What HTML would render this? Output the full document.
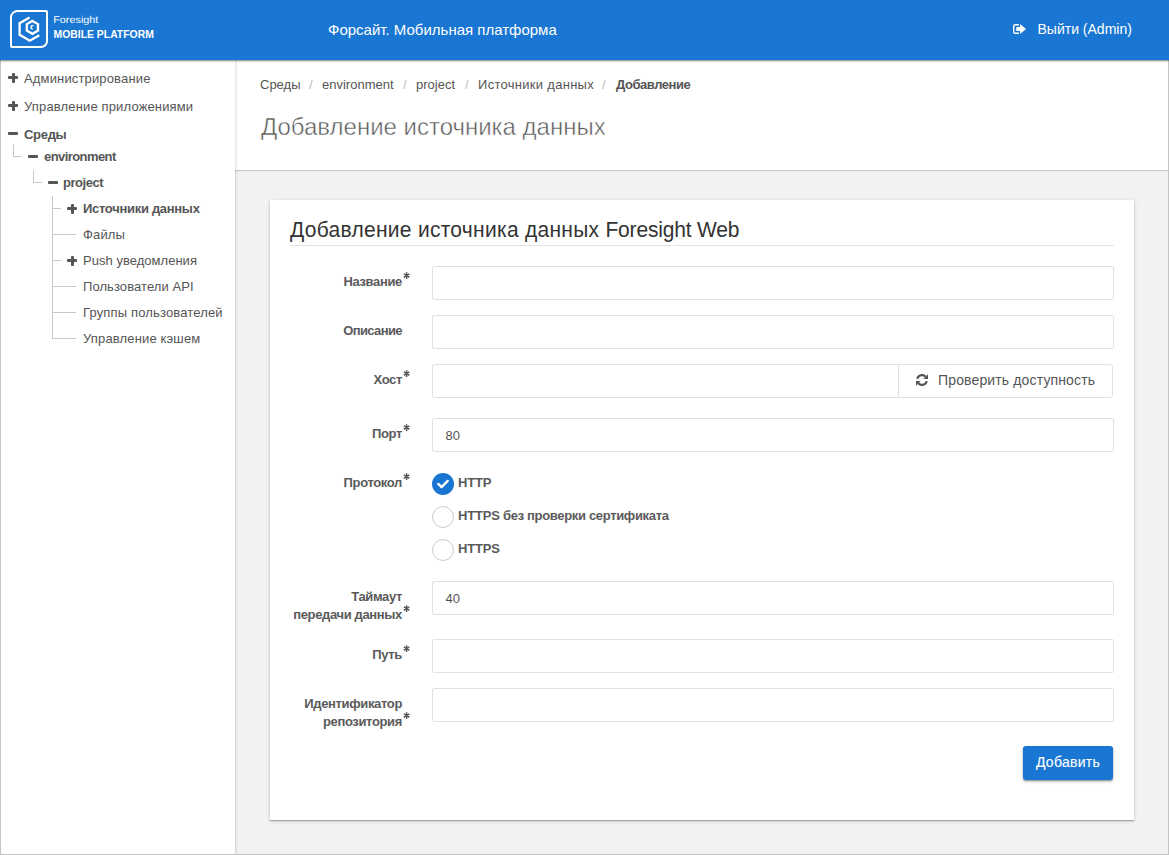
<!DOCTYPE html>
<html lang="ru">
<head>
<meta charset="utf-8">
<title>Добавление источника данных</title>
<style>
*{box-sizing:border-box;}
html,body{margin:0;padding:0;}
body{width:1169px;height:855px;position:relative;overflow:hidden;background:#f2f2f2;font-family:"Liberation Sans",sans-serif;font-size:13px;color:#555;}
.abs{position:absolute;}
#frame{position:absolute;left:0;top:60px;width:1169px;height:795px;border-right:1px solid #c4c4c4;border-bottom:1px solid #c4c4c4;border-left:1px solid #c4c4c4;z-index:10;pointer-events:none;}
#topbar{position:absolute;left:0;top:0;width:1169px;height:60px;background:#1976d2;z-index:20;box-shadow:0 1px 1px rgba(0,0,0,.3),0 1px 3px rgba(0,0,0,.18);}
#topbar .t1{position:absolute;left:328px;top:21px;font-size:15px;line-height:17px;color:#fff;white-space:nowrap;}
#topbar .t2{position:absolute;left:1037.5px;top:21px;font-size:14px;line-height:17px;color:#fff;white-space:nowrap;}
#logo{position:absolute;left:0;top:0;}
#side{position:absolute;left:0;top:60px;width:235px;height:795px;background:#fff;box-shadow:0 0 3px rgba(0,0,0,.27);z-index:5;}
.ti{position:absolute;white-space:nowrap;font-size:13px;line-height:16px;color:#555;letter-spacing:.15px;}
.ti.b{font-weight:bold;letter-spacing:-.3px;color:#555;}
.ln{position:absolute;background:#c8c8c8;}
.pl{position:absolute;width:10px;height:10px;}
.pl:before{content:"";position:absolute;left:0;top:2.7px;width:10.3px;height:3px;background:#555;border-radius:1px;}
.pl.p:after{content:"";position:absolute;left:3.6px;top:0;width:3px;height:10px;background:#555;border-radius:1px;}
#head{position:absolute;left:235px;top:60px;width:934px;height:111px;background:#fff;border-bottom:1px solid #cbcbcb;box-shadow:0 1px 1px rgba(0,0,0,.04);z-index:4;}
.bc{position:absolute;top:17px;font-size:13px;line-height:16px;white-space:nowrap;color:#555;}
.bc.s{color:#bbb;}
#h1{position:absolute;left:26px;top:53px;font-size:24px;line-height:28px;color:#555;white-space:nowrap;letter-spacing:-.01px;-webkit-text-stroke:.5px #fff;}
#card{position:absolute;left:270px;top:200px;width:864px;height:620px;background:#fff;box-shadow:0 1px 1px rgba(0,0,0,.25),0 1px 4px rgba(0,0,0,.15);}
#ct{position:absolute;left:20px;top:17px;font-size:21px;line-height:26px;color:#333;white-space:nowrap;letter-spacing:.13px;transform-origin:0 20px;transform:scaleY(1.05);}
#hr{position:absolute;left:20px;top:45px;width:824px;height:1px;background:#e3e3e3;}
.inp{position:absolute;left:162px;width:682px;height:34px;border:1px solid #dfe2e5;background:#fff;border-radius:2px;font-size:13px;line-height:33px;padding-left:12.5px;color:#555;}
.lb{position:absolute;right:732px;text-align:right;font-weight:bold;font-size:13px;line-height:18px;color:#5a5a5a;white-space:nowrap;letter-spacing:-.35px;}
.lb svg{position:absolute;right:-8.1px;bottom:11.9px;width:7.2px;height:7.2px;overflow:visible;}
.rd{position:absolute;left:162px;width:22px;height:22px;border-radius:50%;border:1px solid #d0cdc7;background:#fff;}
.rd.on{border:0;background:#1976d2;}
.rl{position:absolute;left:188px;font-weight:bold;font-size:13px;line-height:16px;color:#5a5a5a;white-space:nowrap;letter-spacing:-.2px;}
#chk{position:absolute;left:628px;top:164px;width:215px;height:34px;border:1px solid #dfe2e5;border-radius:0 3px 3px 0;background:#fff;font-size:14px;line-height:30px;color:#555;}
#btn{position:absolute;left:753px;top:546px;width:90px;height:34px;background:#1976d2;border-radius:3px;color:#fff;font-size:14px;line-height:33px;text-align:center;letter-spacing:.28px;-webkit-text-stroke:.12px #fff;box-shadow:0 1px 2px rgba(0,0,0,.35),0 2px 3px rgba(0,0,0,.15);}
</style>
</head>
<body>
<div id="topbar">
<svg id="logo" width="200" height="60" viewBox="0 0 200 60">
<path d="M17.5 11 H46 a1 1 0 0 1 1 1 V41 a6 6 0 0 1 -6 6 H12 a1 1 0 0 1 -1 -1 V17.5 a6.5 6.5 0 0 1 6.5 -6.5 Z" fill="none" stroke="#fff" stroke-width="2"/>
<path d="M29.6 17.6 L19.6 23.3 V34.8 L29.8 40.7 L39.3 35.2" fill="none" stroke="#fff" stroke-width="2.35" stroke-linejoin="miter"/>
<path d="M32.4 20.9 L38 24.1 V30.6 L32.4 33.8 L26.8 30.6 V24.1 Z" fill="none" stroke="#fff" stroke-width="2.35"/>
<path d="M33.6 25.9 A1.7 1.7 0 1 0 32.7 29" fill="none" stroke="#fff" stroke-width="1.4"/>
<text text-rendering="geometricPrecision" x="53.2" y="23.2" font-family="Liberation Sans" font-size="10" fill="#fff" textLength="45.2" lengthAdjust="spacingAndGlyphs">Foresight</text>
<text x="53.6" y="37.7" font-family="Liberation Sans" font-size="10.4" font-weight="bold" fill="#fff" textLength="100.2" lengthAdjust="spacingAndGlyphs">MOBILE PLATFORM</text>
</svg>
<div class="t1">Форсайт. Мобильная платформа</div>
<svg class="abs" style="left:1012px;top:23px" width="15" height="12" viewBox="0 0 15 12"><path d="M6.9 1.7 H3.2 a1.5 1.5 0 0 0 -1.5 1.5 V8.8 a1.5 1.5 0 0 0 1.5 1.5 H6.9" fill="none" stroke="#fff" stroke-width="1.4"/><path d="M4.3 3.9 H8.1 V1.1 L14 6 L8.1 10.9 V8.1 H4.3 Z" fill="#fff"/></svg>
<div class="t2">Выйти (Admin)</div>
</div>

<div id="side">
<div class="pl p" style="left:8px;top:13px"></div><div class="ti" style="left:24px;top:11px">Администрирование</div>
<div class="pl p" style="left:8px;top:41px"></div><div class="ti" style="left:24px;top:39px">Управление приложениями</div>
<div class="pl" style="left:8px;top:69px"></div><div class="ti b" style="left:24px;top:67px">Среды</div>
<div class="ln" style="left:13px;top:84px;width:1px;height:12px"></div><div class="ln" style="left:13px;top:96px;width:9px;height:1px"></div>
<div class="pl" style="left:28px;top:92px"></div><div class="ti b" style="left:44px;top:89px;letter-spacing:-.57px">environment</div>
<div class="ln" style="left:33px;top:110px;width:1px;height:12px"></div><div class="ln" style="left:33px;top:122px;width:9px;height:1px"></div>
<div class="pl" style="left:47.5px;top:118px"></div><div class="ti b" style="left:63px;top:115px;letter-spacing:-.45px">project</div>
<div class="ln" style="left:52px;top:136px;width:1px;height:143px"></div>
<div class="ln" style="left:52px;top:148px;width:9px;height:1px"></div><div class="pl p" style="left:67px;top:144px"></div><div class="ti b" style="left:83px;top:141px">Источники данных</div>
<div class="ln" style="left:52px;top:174px;width:24px;height:1px"></div><div class="ti" style="left:83px;top:167px">Файлы</div>
<div class="ln" style="left:52px;top:200px;width:9px;height:1px"></div><div class="pl p" style="left:67px;top:196px"></div><div class="ti" style="left:83px;top:193px;letter-spacing:.03px">Push уведомления</div>
<div class="ln" style="left:52px;top:226px;width:24px;height:1px"></div><div class="ti" style="left:83px;top:219px;letter-spacing:.08px">Пользователи API</div>
<div class="ln" style="left:52px;top:252px;width:24px;height:1px"></div><div class="ti" style="left:83px;top:245px">Группы пользователей</div>
<div class="ln" style="left:52px;top:278px;width:24px;height:1px"></div><div class="ti" style="left:83px;top:271px">Управление кэшем</div>
</div>

<div id="head">
<span class="bc" style="left:25px">Среды</span><span class="bc s" style="left:74px">/</span>
<span class="bc" style="left:87px">environment</span><span class="bc s" style="left:168px">/</span>
<span class="bc" style="left:181px">project</span><span class="bc s" style="left:230px">/</span>
<span class="bc" style="left:243px;letter-spacing:.29px">Источники данных</span><span class="bc s" style="left:367px">/</span>
<span class="bc" style="left:381px;font-weight:bold;letter-spacing:-.45px">Добавление</span>
<div id="h1">Добавление источника данных</div>
</div>

<div id="card">
<div id="ct"><span style="letter-spacing:.28px">Добавление источника данных </span><span style="letter-spacing:-.19px">Foresight Web</span></div>
<div id="hr"></div>

<div class="lb" style="top:73px">Название<svg viewBox="0 0 7.2 7.2"><path d="M3.6 .3V6.9M.85 1.95L6.35 5.25M.85 5.25L6.35 1.95" stroke="#595959" stroke-width="1.5" fill="none"/></svg></div><div class="inp" style="top:66px"></div>
<div class="lb" style="top:122px;letter-spacing:-.6px">Описание</div><div class="inp" style="top:115px"></div>
<div class="lb" style="top:171px">Хост<svg viewBox="0 0 7.2 7.2"><path d="M3.6 .3V6.9M.85 1.95L6.35 5.25M.85 5.25L6.35 1.95" stroke="#595959" stroke-width="1.5" fill="none"/></svg></div><div class="inp" style="top:164px;width:467px;border-radius:2px 0 0 2px"></div>
<div id="chk"><svg class="abs" style="left:17px;top:9px" width="12" height="12" viewBox="0 0 12 12"><path d="M1.25 4.75 A4.9 4.9 0 0 1 9.6 2.7" fill="none" stroke="#555" stroke-width="2.3"/><path d="M12 .3 V4.9 H7.3 Z" fill="#555"/><path d="M10.75 7.25 A4.9 4.9 0 0 1 2.4 9.3" fill="none" stroke="#555" stroke-width="2.3"/><path d="M0 11.7 V7.1 H4.7 Z" fill="#555"/></svg><span class="abs" style="left:39px;top:0;white-space:nowrap;letter-spacing:.14px">Проверить доступность</span></div>
<div class="lb" style="top:225px">Порт<svg viewBox="0 0 7.2 7.2"><path d="M3.6 .3V6.9M.85 1.95L6.35 5.25M.85 5.25L6.35 1.95" stroke="#595959" stroke-width="1.5" fill="none"/></svg></div><div class="inp" style="top:218px">80</div>
<div class="lb" style="top:274px">Протокол<svg viewBox="0 0 7.2 7.2"><path d="M3.6 .3V6.9M.85 1.95L6.35 5.25M.85 5.25L6.35 1.95" stroke="#595959" stroke-width="1.5" fill="none"/></svg></div>
<div class="rd on" style="top:273px"><svg class="abs" style="left:4px;top:5px" width="14" height="12" viewBox="0 0 14 12"><path d="M2.3 5.9 L5.6 9.1 L11.7 2.9" fill="none" stroke="#fff" stroke-width="2.4" stroke-linecap="round" stroke-linejoin="round"/></svg></div><div class="rl" style="top:275px">HTTP</div>
<div class="rd" style="top:306px"></div><div class="rl" style="top:308px">HTTPS <span style="letter-spacing:-.33px">без проверки сертификата</span></div>
<div class="rd" style="top:339px"></div><div class="rl" style="top:341px">HTTPS</div>
<div class="lb" style="top:388px">Таймаут<br>передачи данных<svg viewBox="0 0 7.2 7.2"><path d="M3.6 .3V6.9M.85 1.95L6.35 5.25M.85 5.25L6.35 1.95" stroke="#595959" stroke-width="1.5" fill="none"/></svg></div><div class="inp" style="top:381px">40</div>
<div class="lb" style="top:446px">Путь<svg viewBox="0 0 7.2 7.2"><path d="M3.6 .3V6.9M.85 1.95L6.35 5.25M.85 5.25L6.35 1.95" stroke="#595959" stroke-width="1.5" fill="none"/></svg></div><div class="inp" style="top:439px"></div>
<div class="lb" style="top:495px">Идентификатор<br>репозитория<svg viewBox="0 0 7.2 7.2"><path d="M3.6 .3V6.9M.85 1.95L6.35 5.25M.85 5.25L6.35 1.95" stroke="#595959" stroke-width="1.5" fill="none"/></svg></div><div class="inp" style="top:488px"></div>
<div id="btn">Добавить</div>
</div>
<div id="frame"></div>
</body>
</html>
